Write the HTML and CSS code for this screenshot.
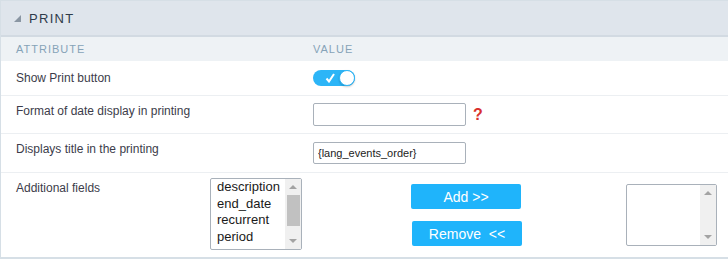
FILE: index.html
```html
<!DOCTYPE html>
<html>
    <head>
        <link rel="stylesheet" href="styles.css">
    </head>
    <body>
        <div class="panel">
            <div class="panel-title">
                <span class="caret"></span>
                <span>PRINT</span>
            </div>
            <div class="row head">
                <div class="label">ATTRIBUTE</div>
                <div class="value">VALUE</div>
            </div>
            <div class="row r1">
                <div class="label">Show Print button</div>
                <div class="value">
                    <span class="toggle">
                        <svg class="check" width="10" height="10" viewBox="0 0 10 10">
                            <polyline points="1.5,5.5 4,8.5 9,1" fill="none" stroke="#ffffff" stroke-width="2"/>
                        </svg>
                        <span class="knob"></span>
                    </span>
                </div>
            </div>
            <div class="row r2">
                <div class="label">Format of date display in printing</div>
                <div class="value">
                    <input class="field" type="text" value="">
                    <span class="help">?</span>
                </div>
            </div>
            <div class="row r3">
                <div class="label">Displays title in the printing</div>
                <div class="value">
                    <input class="field small" type="text" value="{lang_events_order}">
                </div>
            </div>
            <div class="row r4">
                <div class="label">Additional fields</div>
                <div class="listbox left">
                    <ul class="items">
                        <li>description</li>
                        <li>end_date</li>
                        <li>recurrent</li>
                        <li>period</li>
                    </ul>
                    <div class="scroll">
                        <span class="arrow up"></span>
                        <span class="thumb"></span>
                        <span class="arrow down"></span>
                    </div>
                </div>
                <div class="buttons">
                    <button class="btn">Add &gt;&gt;</button>
                    <button class="btn">Remove &nbsp;&lt;&lt;</button>
                </div>
                <div class="listbox right">
                    <ul class="items"></ul>
                    <div class="scroll">
                        <span class="arrow up"></span>
                        <span class="arrow down"></span>
                    </div>
                </div>
            </div>
        </div>
    </body>
</html>
```

FILE: styles.css
```css
body {
    margin: 0;
    font-family: "Liberation Sans", Arial, sans-serif;
    background: #ffffff;
}

.panel {
    border-left: 1px solid #d6dfe6;
    border-top: 1px solid #d6dfe6;
    border-bottom: 2px solid #d6dfe6;
    height: 259px;
    box-sizing: border-box;
}

.panel-title {
    height: 34px;
    background: #dfe5ec;
    border-bottom: 2px solid #d2dae2;
    display: flex;
    align-items: center;
    padding-left: 13px;
    font-size: 13px;
    letter-spacing: 1.3px;
    color: #2f3b4a;
}
.caret {
    width: 0;
    height: 0;
    border-left: 7px solid transparent;
    border-bottom: 7px solid #8a96a3;
    margin-right: 8px;
    margin-top: 1px;
}

.row {
    display: flex;
    border-bottom: 1px solid #eceff2;
    color: #3c3c4a;
    font-size: 12px;
}
.row .label {
    width: 297px;
    padding-left: 15px;
}
.row.head {
    background: #eef2f5;
    height: 24px;
    align-items: center;
    color: #86a3b8;
    font-size: 11px;
    letter-spacing: 1px;
    border-bottom: none;
}
.row.r1 {
    height: 34px;
    align-items: center;
}
.row.r2 {
    height: 37px;
    align-items: center;
}
.row.r2 .label {
    align-self: flex-start;
    padding-top: 8px;
}
.row.r3 {
    height: 38px;
    align-items: center;
}
.row.r3 .label {
    align-self: flex-start;
    padding-top: 8px;
}
.value {
    display: flex;
    align-items: center;
}

.toggle {
    position: relative;
    display: inline-block;
    width: 42px;
    height: 16px;
    border-radius: 8px;
    background: #2cb5f7;
}
.check {
    position: absolute;
    left: 12px;
    top: 3px;
}
.knob {
    position: absolute;
    right: 0;
    top: 0;
    width: 14px;
    height: 14px;
    border-radius: 50%;
    background: #ffffff;
    border: 1px solid #2cb5f7;
    box-shadow: 0 1px 2px rgba(0, 0, 0, 0.2);
}

.field {
    box-sizing: border-box;
    width: 153px;
    height: 23px;
    border: 1px solid #a9b1ba;
    border-radius: 2px;
    margin: 0;
    padding: 0 4px;
    font-family: "Liberation Sans", Arial, sans-serif;
    font-size: 12px;
    color: #222;
}
.field.small {
    height: 22px;
    font-size: 11px;
}
.help {
    margin-left: 7px;
    color: #d9302c;
    font-weight: bold;
    font-size: 16px;
}

.row.r4 {
    flex: 1;
    align-items: flex-start;
    border-bottom: none;
}
.row.r4 .label {
    width: 194px;
    padding-top: 8px;
}

.listbox {
    box-sizing: border-box;
    display: flex;
    border: 1px solid #a9b1ba;
    border-radius: 2px;
    background: #fff;
}
.listbox.left {
    width: 92px;
    height: 72px;
    margin-top: 5px;
}
.listbox.right {
    width: 91px;
    height: 62px;
    margin-top: 11px;
    margin-left: 104px;
}
.items {
    flex: 1;
    list-style: none;
    margin: 0;
    padding: 0 0 0 6px;
    font-size: 13px;
    line-height: 16.5px;
    color: #1a1a1a;
}
.scroll {
    width: 16px;
    background: #f0f0f0;
    display: flex;
    flex-direction: column;
    align-items: center;
}
.arrow {
    width: 0;
    height: 0;
    border-left: 4px solid transparent;
    border-right: 4px solid transparent;
}
.arrow.up {
    border-bottom: 4px solid #a3a3a3;
    margin-top: 6px;
}
.arrow.down {
    border-top: 4px solid #a3a3a3;
    margin-top: auto;
    margin-bottom: 6px;
}
.thumb {
    width: 13px;
    height: 31px;
    background: #c1c1c1;
    margin-top: 6px;
}

.buttons {
    display: flex;
    flex-direction: column;
    margin-left: 109px;
    margin-top: 11px;
    gap: 12px;
}
.btn {
    width: 110px;
    height: 25px;
    border: none;
    border-radius: 2px;
    background: #1fb4fb;
    color: #ffffff;
    font-family: "Liberation Sans", Arial, sans-serif;
    font-size: 14px;
    padding: 0;
}
.btn + .btn {
    margin-left: 1px;
}
```
